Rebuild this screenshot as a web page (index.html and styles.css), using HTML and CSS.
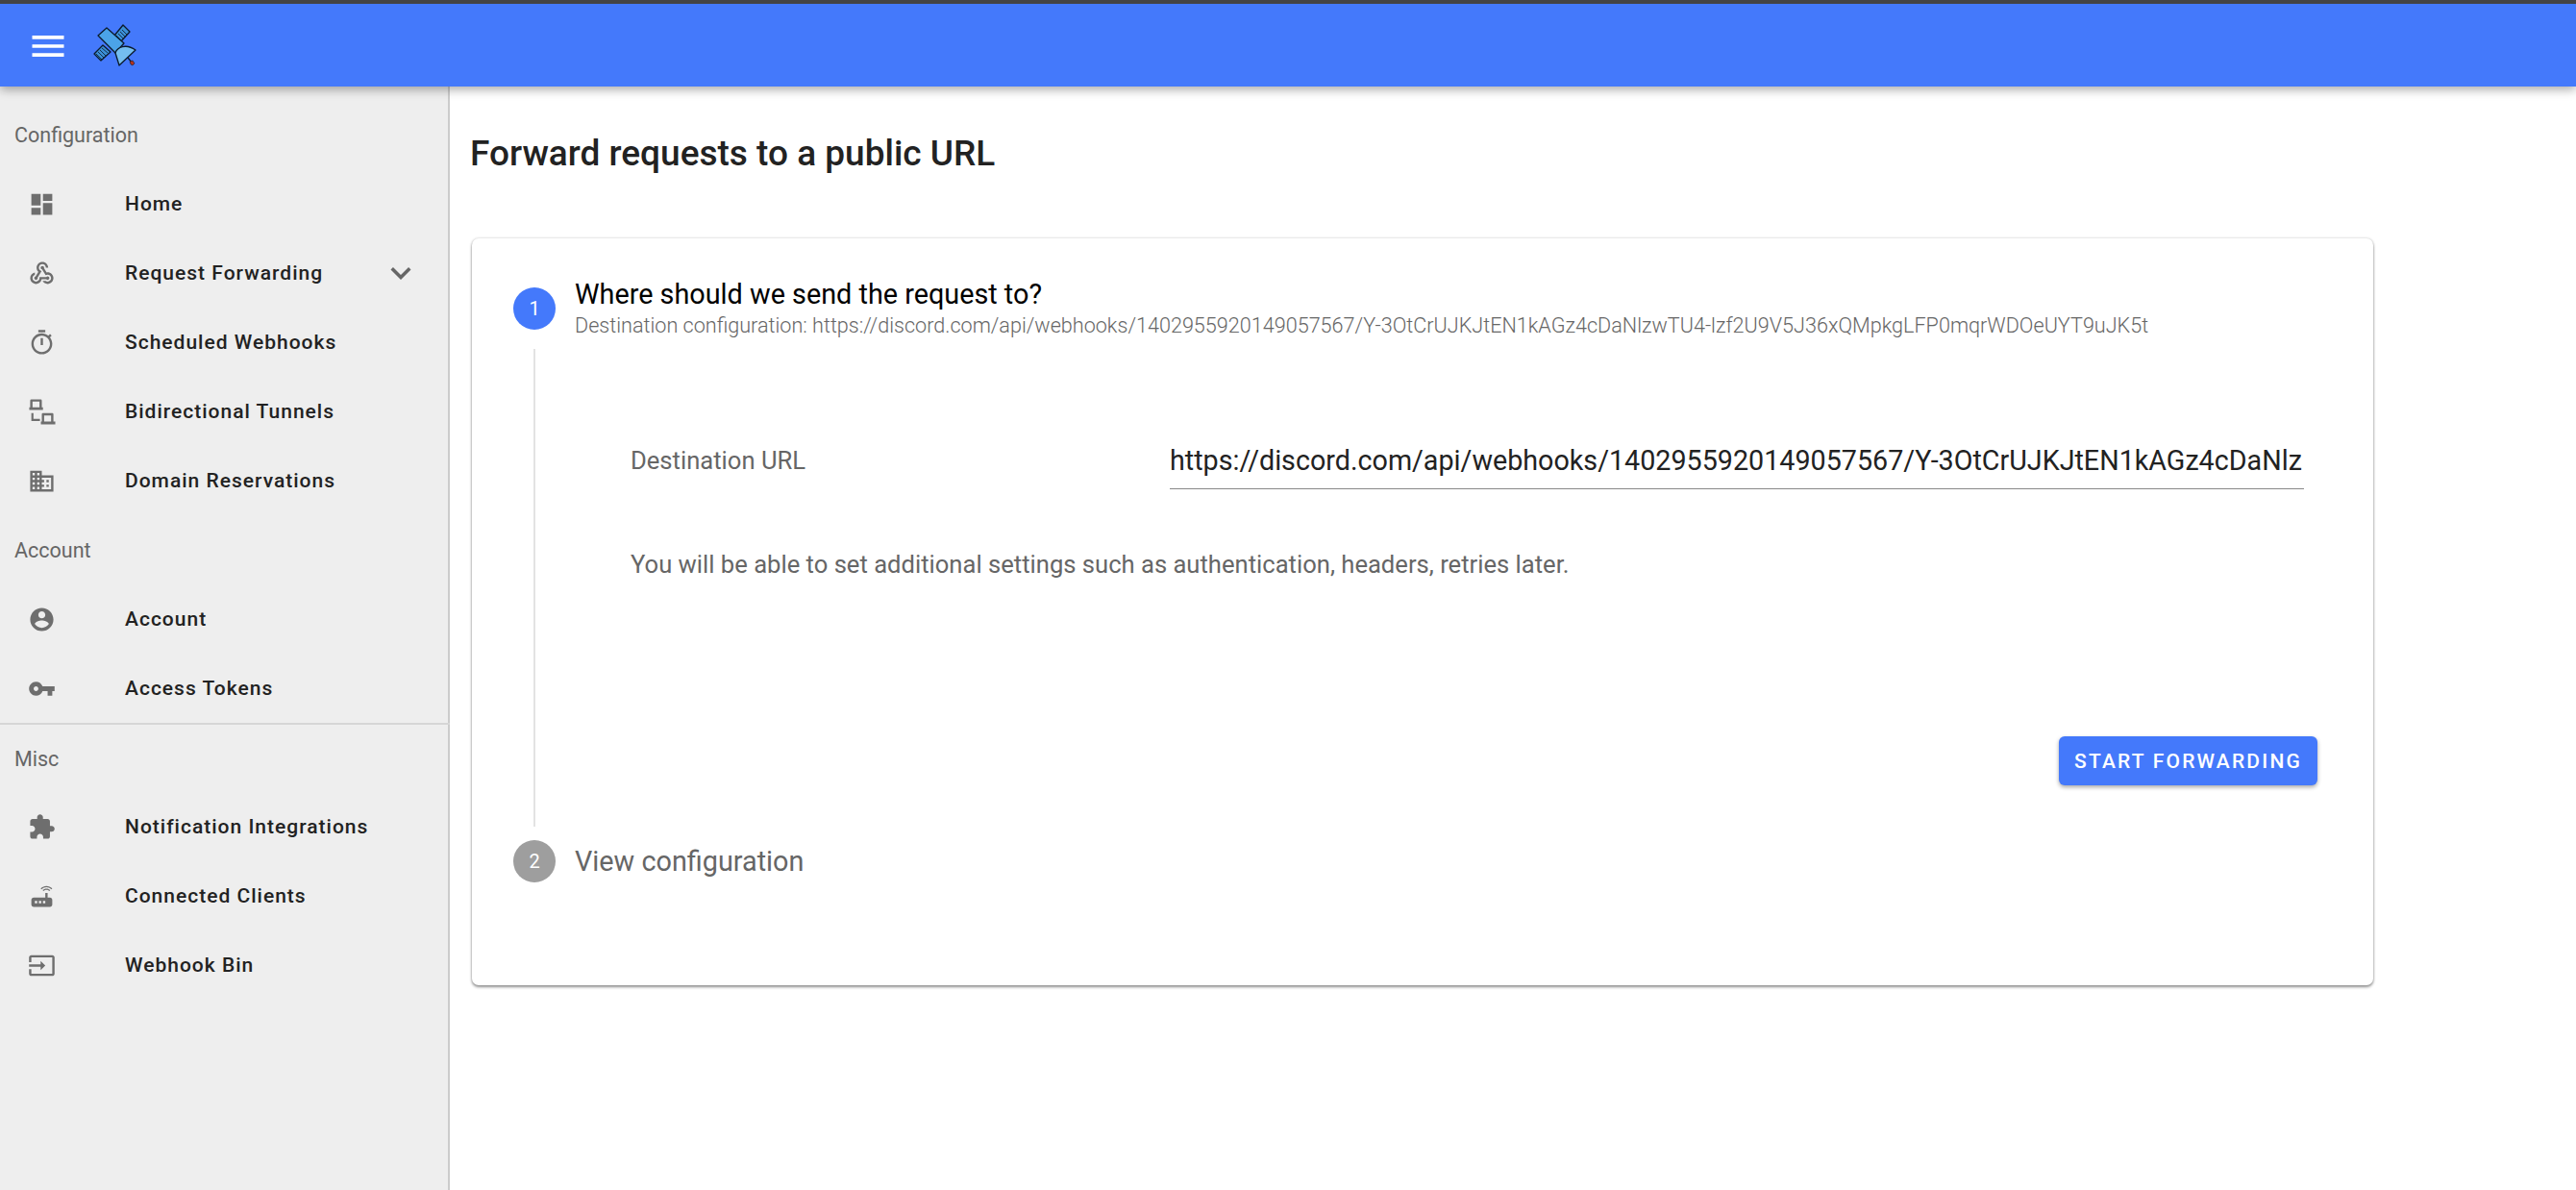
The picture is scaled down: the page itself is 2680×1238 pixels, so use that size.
FILE: index.html
```html
<!DOCTYPE html>
<html lang="en">
<head>
    <meta charset="UTF-8">
    <title>Forward requests to a public URL</title>
    <link rel="stylesheet" href="styles.css">
</head>
<body>

<div class="top-strip"></div>
<header class="app-bar">
    <svg class="menu-icon" viewBox="0 0 24 24"><path d="M3 18h18v-2H3v2zm0-5h18v-2H3v2zm0-7v2h18V6H3z"/></svg>
    <svg class="logo" viewBox="96 24 47 46">
        <g stroke="#0b1a2b" stroke-width="1.3" stroke-linejoin="round">
            <path fill="#3b8fd6" d="M119 37l9-11 7 7-9 10z"/>
            <path fill="#3b8fd6" d="M98 56l9-9 8 7-10 9z"/>
            <path fill="none" stroke-width=".8" d="M121 37l6 6M123 35l6 6M125 33l6 6M127 31l5 5M100 56l6 6M102 54l6 6M104 52l6 6M106 50l6 5"/>
            <path fill="#4ba3e8" d="M102 37l9-8 18 16-9 10z"/>
            <path fill="#74bdf0" d="M120 55c2-6 11-10 21-3l-17 16z"/>
            <path fill="none" d="M133 60l4 5"/>
        </g>
        <path fill="#b2331f" stroke="#0b1a2b" stroke-width=".6" d="M135 64l3-1 2 3-2 2-2-1z"/>
    </svg>
</header>

<div class="layout">
    <nav class="sidebar">
        <div class="nav-title first">Configuration</div>
        <a class="nav-item">
            <svg class="nav-icon" viewBox="0 0 24 24"><path d="M3 13h8V3H3v10zm0 8h8v-6H3v6zm10 0h8V11h-8v10zm0-18v6h8V3h-8z"/></svg>
            Home
        </a>
        <a class="nav-item">
            <svg class="nav-icon" viewBox="0 0 24 24"><path d="M10 15h5.880c.27-.31.67-.5 1.120-.5.83 0 1.500.67 1.500 1.500s-.67 1.500-1.500 1.500c-.44 0-.84-.19-1.120-.5H11.900c-.46 2.280-2.480 4-4.900 4-2.760 0-5-2.240-5-5 0-2.420 1.720-4.440 4-4.900v2.070c-1.160.41-2 1.530-2 2.830 0 1.650 1.350 3 3 3s3-1.350 3-3v-1zm2.500-11c1.650 0 3 1.350 3 3h2c0-2.760-2.240-5-5-5s-5 2.240-5 5c0 1.430.6 2.710 1.550 3.620l-2.350 3.900c-.68.14-1.200.75-1.200 1.480 0 .83.67 1.500 1.500 1.500s1.500-.67 1.500-1.500c0-.16-.02-.31-.07-.45l3.380-5.630C10.490 9.610 9.500 8.420 9.500 7c0-1.650 1.350-3 3-3zm4.500 9c-.64 0-1.230.2-1.720.54l-3.050-5.070C11.530 8.350 11 7.740 11 7c0-.83.67-1.500 1.500-1.500S14 6.170 14 7c0 .15-.02.29-.06.43l2.190 3.650c.28-.05.57-.08.87-.08 2.760 0 5 2.240 5 5s-2.240 5-5 5c-1.850 0-3.470-1.010-4.330-2.500h2.670c.48.32 1.050.5 1.660.5 1.650 0 3-1.350 3-3s-1.350-3-3-3z"/></svg>
            Request Forwarding
            <svg class="expand-icon" viewBox="0 0 24 24"><path d="M16.590 8.590L12 13.170 7.410 8.590 6 10l6 6 6-6z"/></svg>
        </a>
        <a class="nav-item">
            <svg class="nav-icon" viewBox="0 0 24 24"><path d="M15 1H9v2h6V1zm-4 13h2V8h-2v6zm8.030-6.610l1.420-1.420c-.43-.51-.9-.99-1.410-1.410l-1.420 1.420C16.070 4.740 14.120 4 12 4c-4.970 0-9 4.030-9 9s4.020 9 9 9 9-4.030 9-9c0-2.120-.74-4.070-1.970-5.610zM12 20c-3.870 0-7-3.130-7-7s3.130-7 7-7 7 3.130 7 7-3.130 7-7 7z"/></svg>
            Scheduled Webhooks
        </a>
        <a class="nav-item">
            <svg class="nav-icon" viewBox="0 0 24 24"><path fill-rule="evenodd" d="M3 1.200h8a1 1 0 0 1 1 1V8h1v2.400H1.200V8H2V2.200a1 1 0 0 1 1-1zM4 3.200V8h6V3.200zM13 13h8a1 1 0 0 1 1 1v6.300h1.600v2.500H11.200v-2.500H12V14a1 1 0 0 1 1-1zM14 15v5.300h6V15zM3 13h1.800v5h5.600v1.800H3z"/></svg>
            Bidirectional Tunnels
        </a>
        <a class="nav-item">
            <svg class="nav-icon" viewBox="0 0 24 24"><path d="M12 7V3H2v18h20V7H12zM6 19H4v-2h2v2zm0-4H4v-2h2v2zm0-4H4V9h2v2zm0-4H4V5h2v2zm4 12H8v-2h2v2zm0-4H8v-2h2v2zm0-4H8V9h2v2zm0-4H8V5h2v2zm10 12h-8v-2h2v-2h-2v-2h2v-2h-2V9h8v10zm-2-8h-2v2h2v-2zm0 4h-2v2h2v-2z"/></svg>
            Domain Reservations
        </a>

        <div class="nav-title">Account</div>
        <a class="nav-item">
            <svg class="nav-icon" viewBox="0 0 24 24"><path d="M12 2C6.480 2 2 6.480 2 12s4.480 10 10 10 10-4.480 10-10S17.520 2 12 2zm0 3c1.660 0 3 1.340 3 3s-1.340 3-3 3-3-1.340-3-3 1.340-3 3-3zm0 14.200c-2.500 0-4.710-1.280-6-3.220.03-1.990 4-3.080 6-3.080 1.990 0 5.970 1.090 6 3.080-1.290 1.940-3.500 3.220-6 3.220z"/></svg>
            Account
        </a>
        <a class="nav-item">
            <svg class="nav-icon" viewBox="0 0 24 24"><path d="M12.650 10C11.830 7.670 9.610 6 7 6c-3.310 0-6 2.690-6 6s2.690 6 6 6c2.610 0 4.830-1.670 5.650-4H17v4h4v-4h2v-4H12.650zM7 14c-1.100 0-2-.9-2-2s.9-2 2-2 2 .9 2 2-.9 2-2 2z"/></svg>
            Access Tokens
        </a>
        <div class="nav-divider"></div>

        <div class="nav-title misc">Misc</div>
        <a class="nav-item">
            <svg class="nav-icon" viewBox="0 0 24 24"><path d="M20.500 11H19V7c0-1.100-.9-2-2-2h-4V3.500C13 2.120 11.880 1 10.500 1S8 2.120 8 3.500V5H4c-1.100 0-1.990.9-1.990 2v3.800H3.500c1.490 0 2.700 1.210 2.700 2.700s-1.210 2.700-2.700 2.700H2V20c0 1.100.9 2 2 2h3.800v-1.500c0-1.490 1.210-2.700 2.700-2.700 1.490 0 2.700 1.210 2.700 2.700V22H17c1.100 0 2-.9 2-2v-4h1.500c1.380 0 2.500-1.120 2.500-2.500S21.880 11 20.500 11z"/></svg>
            Notification Integrations
        </a>
        <a class="nav-item">
            <svg class="nav-icon" viewBox="0 0 24 24"><path d="M20.200 5.900l.8-.8C19.600 3.700 17.800 3 16 3s-3.600.7-5 2.100l.8.8C13 4.800 14.500 4.200 16 4.200s3 .6 4.200 1.700zm-.9.8c-.9-.9-2.100-1.400-3.300-1.400s-2.400.5-3.300 1.400l.8.8c.7-.7 1.600-1 2.500-1 .9 0 1.800.3 2.500 1l.8-.8zM19 13h-2V9h-2v4H5c-1.100 0-2 .9-2 2v4c0 1.100.9 2 2 2h14c1.100 0 2-.9 2-2v-4c0-1.100-.9-2-2-2zM8 18H6v-2h2v2zm3.500 0h-2v-2h2v2zm3.500 0h-2v-2h2v2z"/></svg>
            Connected Clients
        </a>
        <a class="nav-item">
            <svg class="nav-icon" viewBox="0 0 24 24"><path d="M21 3.010H3c-1.100 0-2 .9-2 2V9h2V4.990h18v14.030H3V15H1v4.010c0 1.100.9 1.980 2 1.980h18c1.100 0 2-.88 2-1.980v-14c0-1.110-.9-2-2-2zM11 16l4-4-4-4v3H1v2h10v3z"/></svg>
            Webhook Bin
        </a>
    </nav>

    <main class="content">
        <h1 class="page-title">Forward requests to a public URL</h1>

        <section class="card">
            <div class="step-head">
                <span class="step-num active">1</span>
                <div>
                    <div class="step-title">Where should we send the request to?</div>
                    <div class="step-sub">Destination configuration: https://discord.com/api/webhooks/1402955920149057567/Y-3OtCrUJKJtEN1kAGz4cDaNlzwTU4-lzf2U9V5J36xQMpkgLFP0mqrWDOeUYT9uJK5t</div>
                </div>
            </div>

            <div class="step-body">
                <div class="field-row">
                    <label class="field-label">Destination URL</label>
                    <div class="url-input">https://discord.com/api/webhooks/1402955920149057567/Y-3OtCrUJKJtEN1kAGz4cDaNlz</div>
                </div>
                <p class="help">You will be able to set additional settings such as authentication, headers, retries later.</p>
                <div class="actions">
                    <button class="primary-btn">START FORWARDING</button>
                </div>
            </div>

            <div class="step-head">
                <span class="step-num">2</span>
                <div class="step-title muted">View configuration</div>
            </div>
        </section>
    </main>
</div>

</body>
</html>
```
FILE: styles.css
```css
html, body {
    height: 100%;
    margin: 0;
    overflow: hidden;
}
body {
    display: flex;
    flex-direction: column;
    background: #fff;
    font-family: Roboto, "Liberation Sans", sans-serif;
}

.top-strip {
    height: 4px;
    background: #444;
    position: relative;
    z-index: 3;
}
.app-bar {
    height: 86px;
    flex: none;
    display: flex;
    align-items: center;
    background: #4479fb;
    box-shadow: 0 3px 10px rgba(0, 0, 0, 0.35);
    position: relative;
    z-index: 2;
}
.menu-icon {
    width: 44px;
    height: 44px;
    margin-left: 28px;
    margin-top: 2px;
    fill: #fff;
}
.logo {
    width: 47px;
    height: 46px;
    margin-left: 24px;
}

.layout {
    flex: 1;
    display: flex;
    min-height: 0;
}

.sidebar {
    width: 466px;
    flex: none;
    background: #eee;
    border-right: 2px solid #ccc;
    padding-top: 27px;
}
.nav-title {
    height: 48px;
    line-height: 48px;
    padding-left: 15px;
    font-size: 21.5px;
    color: #666;
    margin: 13px 0 11px;
}
.nav-title.first {
    margin-top: 0;
}
.nav-item {
    height: 72px;
    display: flex;
    align-items: center;
    padding-left: 29px;
    font-size: 21px;
    font-weight: 500;
    letter-spacing: 1px;
    color: #222;
}
.nav-icon {
    width: 29px;
    height: 29px;
    margin-right: 72px;
    fill: #6e6e6e;
    flex: none;
}
.expand-icon {
    width: 42px;
    height: 42px;
    margin-left: auto;
    margin-right: 28px;
    fill: #666;
}
.nav-divider {
    height: 2px;
    background: #d6d6d6;
    margin-right: -2px;
}
.nav-title.misc {
    margin: 12px 0 10px;
}

.content {
    flex: 1;
    padding-left: 21px;
}
.page-title {
    margin: 46px 0 0;
    font-size: 37px;
    line-height: 48px;
    font-weight: 500;
    color: #222;
}
.card {
    width: 1978px;
    height: 777px;
    box-sizing: border-box;
    margin: 64px 0 0 2px;
    padding: 40px 0 0 43px;
    background: #fff;
    border-radius: 7px;
    box-shadow: 0 2px 3px rgba(0, 0, 0, 0.4), 0 0 3px rgba(0, 0, 0, 0.2);
}

.step-head {
    display: flex;
    align-items: center;
    gap: 20px;
}
.step-num {
    width: 44px;
    height: 44px;
    flex: none;
    border-radius: 50%;
    display: flex;
    align-items: center;
    justify-content: center;
    background: #9e9e9e;
    color: #fff;
    font-size: 20px;
}
.step-num.active {
    background: #4479fb;
}
.step-title {
    font-size: 28.8px;
    line-height: 36px;
    color: #000;
}
.step-title.muted {
    color: #666;
}
.step-sub {
    font-size: 21.6px;
    line-height: 29px;
    font-weight: 300;
    color: #666;
}
.step-body {
    height: 497px;
    box-sizing: border-box;
    margin: 10px 0 14px 21px;
    padding: 85px 72px 0 99px;
    border-left: 2px solid #e3e3e3;
}
.field-row {
    display: flex;
    align-items: center;
}
.field-label {
    width: 561px;
    flex: none;
    font-size: 25.6px;
    color: #666;
}
.url-input {
    flex: 1;
    min-width: 0;
    white-space: nowrap;
    font-size: 28.7px;
    line-height: 34px;
    padding: 14px 0 12px;
    color: #222;
    border-bottom: 1px solid #888;
}
.help {
    margin: 61px 0 0;
    font-size: 25.6px;
    line-height: 34px;
    color: #666;
}
.actions {
    display: flex;
    justify-content: flex-end;
    margin: 162px -14px 0 0;
}
.primary-btn {
    width: 269px;
    height: 51px;
    padding: 0;
    border: none;
    border-radius: 6px;
    background: #4479fb;
    color: #fff;
    font-family: inherit;
    font-size: 21px;
    font-weight: 500;
    letter-spacing: 2.2px;
    box-shadow: 0 2px 4px rgba(0, 0, 0, 0.35);
}
```
